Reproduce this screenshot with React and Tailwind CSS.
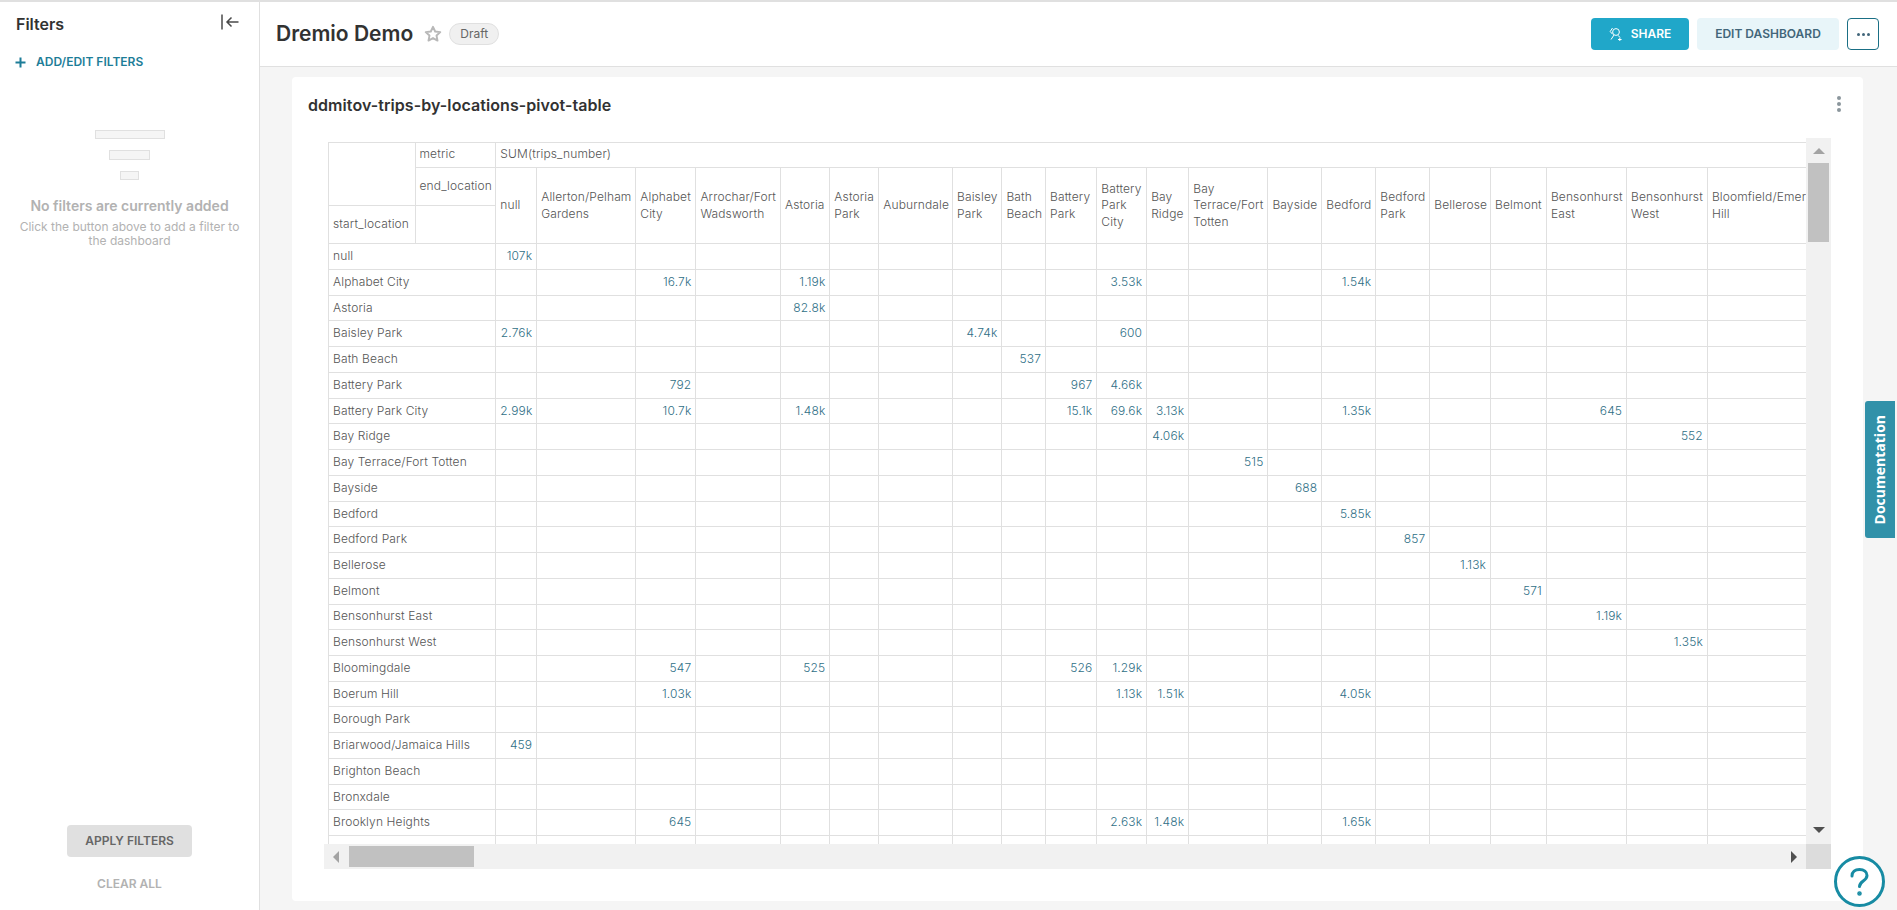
import React from 'react';

const colWidths = [
  'w-[86.5px]', 'w-[80.8px]', 'w-[40.9px]', 'w-[99.1px]', 'w-[60.1px]', 'w-[84.6px]', 'w-[49.4px]', 'w-[48.9px]',
  'w-[73.8px]', 'w-[49.4px]', 'w-[43.6px]', 'w-[51.3px]', 'w-[49.8px]', 'w-[42.1px]', 'w-[79.2px]', 'w-[53.9px]',
  'w-[54px]', 'w-[54px]', 'w-[60.8px]', 'w-[55.8px]', 'w-[80.2px]', 'w-[80.8px]', 'w-[125px]',
];

const endLocations = [
  'null', 'Allerton/Pelham Gardens', 'Alphabet City', 'Arrochar/Fort Wadsworth', 'Astoria', 'Astoria Park',
  'Auburndale', 'Baisley Park', 'Bath Beach', 'Battery Park', 'Battery Park City', 'Bay Ridge',
  'Bay Terrace/Fort Totten', 'Bayside', 'Bedford', 'Bedford Park', 'Bellerose', 'Belmont',
  'Bensonhurst East', 'Bensonhurst West', 'Bloomfield/Emerson Hill',
];

const rows = [
  ['null', { 0: '107k' }],
  ['Alphabet City', { 2: '16.7k', 4: '1.19k', 10: '3.53k', 14: '1.54k' }],
  ['Astoria', { 4: '82.8k' }],
  ['Baisley Park', { 0: '2.76k', 7: '4.74k', 10: '600' }],
  ['Bath Beach', { 8: '537' }],
  ['Battery Park', { 2: '792', 9: '967', 10: '4.66k' }],
  ['Battery Park City', { 0: '2.99k', 2: '10.7k', 4: '1.48k', 9: '15.1k', 10: '69.6k', 11: '3.13k', 14: '1.35k', 18: '645' }],
  ['Bay Ridge', { 11: '4.06k', 19: '552' }],
  ['Bay Terrace/Fort Totten', { 12: '515' }],
  ['Bayside', { 13: '688' }],
  ['Bedford', { 14: '5.85k' }],
  ['Bedford Park', { 15: '857' }],
  ['Bellerose', { 16: '1.13k' }],
  ['Belmont', { 17: '571' }],
  ['Bensonhurst East', { 18: '1.19k' }],
  ['Bensonhurst West', { 19: '1.35k' }],
  ['Bloomingdale', { 2: '547', 4: '525', 9: '526', 10: '1.29k' }],
  ['Boerum Hill', { 2: '1.03k', 10: '1.13k', 11: '1.51k', 14: '4.05k' }],
  ['Borough Park', {}],
  ['Briarwood/Jamaica Hills', { 0: '459' }],
  ['Brighton Beach', {}],
  ['Bronxdale', {}],
  ['Brooklyn Heights', { 2: '645', 10: '2.63k', 11: '1.48k', 14: '1.65k' }],
  ['\u00a0', {}],
];

const cell = 'border border-[#e0e0e0] px-1 py-[3.97px] align-middle';

function Triangle({ dir, className }) {
  const points = { up: '0,6 6,0 12,6', down: '0,0 12,0 6,6', left: '6,0 6,12 0,6', right: '0,0 6,6 0,12' }[dir];
  const horizontal = dir === 'up' || dir === 'down';
  return (
    <svg width={horizontal ? 12 : 6} height={horizontal ? 6 : 12} viewBox={horizontal ? '0 0 12 6' : '0 0 6 12'} className={className}>
      <polygon points={points} fill="currentColor" />
    </svg>
  );
}

function PivotTable() {
  return (
    <table className="table-fixed w-[1504px] border-collapse text-xs font-light tracking-[0.13px] leading-[1.4] text-[#555555]">
      <colgroup>
        {colWidths.map((w, i) => (
          <col key={i} className={w} />
        ))}
      </colgroup>
      <thead>
        <tr>
          <th rowSpan={2} className={`${cell} font-light text-left`}></th>
          <th className={`${cell} font-light text-left`}>metric</th>
          <th colSpan={21} className={`${cell} font-light text-left`}>SUM(trips_number)</th>
        </tr>
        <tr className="h-[38px]">
          <th className={`${cell} font-light text-left`}>end_location</th>
          {endLocations.map((name) => (
            <th key={name} rowSpan={2} className={`${cell} font-light text-left`}>{name}</th>
          ))}
        </tr>
        <tr className="h-[38px]">
          <th className={`${cell} font-light text-left`}>start_location</th>
          <th className={cell}></th>
        </tr>
      </thead>
      <tbody>
        {rows.map(([label, values], r) => (
          <tr key={r}>
            <td colSpan={2} className={cell}>{label}</td>
            {endLocations.map((_, c) => (
              <td key={c} className={`${cell} text-right text-[#2f6f86]`}>{values[c] || '\u00a0'}</td>
            ))}
          </tr>
        ))}
      </tbody>
    </table>
  );
}

function Sidebar() {
  return (
    <aside className="w-[260px] shrink-0 border-r border-[#e0e0e0] flex flex-col bg-white">
      <div className="flex items-center justify-between pl-4 pr-[20px] h-[44px]">
        <span className="text-base font-semibold text-[#323232]">Filters</span>
        <svg width="18" height="16" viewBox="0 0 18 16" fill="none" stroke="#4a4a4a" strokeWidth="1.5" className="-mt-[4px]">
          <path d="M1 0.5V15.5" />
          <path d="M17.5 8H6M10.5 3.5 6 8l4.5 4.5" />
        </svg>
      </div>
      <div className="flex items-center pl-[15px] mt-[4px] h-[24px]">
        <svg width="11" height="11" viewBox="0 0 11 11" stroke="#1d7d98" strokeWidth="2">
          <path d="M5.5 0.5v10M0.5 5.5h10" />
        </svg>
        <span className="ml-[10px] text-xs font-semibold text-[#1d7d98]">ADD/EDIT FILTERS</span>
      </div>
      <div className="flex flex-col items-center mt-[56px]">
        <div className="w-[70px] h-[9px] bg-[#f5f5f5] border border-[#e0e0e0]"></div>
        <div className="w-[41px] h-[10px] bg-[#f5f5f5] border border-[#e0e0e0] mt-[11px]"></div>
        <div className="w-[19px] h-[9px] bg-[#f5f5f5] border border-[#e0e0e0] mt-[11px]"></div>
        <p className="mt-[16px] text-sm font-semibold text-[#b2b2b2]">No filters are currently added</p>
        <p className="mt-[4px] w-[240px] text-center text-xs leading-[14px] text-[#b2b2b2]">
          Click the button above to add a filter to the dashboard
        </p>
      </div>
      <div className="mt-auto flex flex-col items-center pb-[18px]">
        <button className="w-[125px] h-8 rounded bg-[#e0e0e0] text-xs font-semibold text-[#666666]">APPLY FILTERS</button>
        <span className="mt-[19px] text-xs font-semibold text-[#b2b2b2]">CLEAR ALL</span>
      </div>
    </aside>
  );
}

function Header() {
  return (
    <header className="h-[65px] shrink-0 border-b border-[#e0e0e0] bg-white flex items-center pl-4 pr-[18px]">
      <h1 className="text-[21px] font-semibold text-[#323232]">Dremio Demo</h1>
      <svg width="18" height="18" viewBox="0 0 24 24" fill="none" stroke="#b8b8b8" strokeWidth="2.6" strokeLinejoin="round" className="ml-[11px]">
        <path d="M12 2.5l2.9 6.2 6.8.8-5 4.6 1.3 6.7-6-3.4-6 3.4 1.3-6.7-5-4.6 6.8-.8z" />
      </svg>
      <span className="ml-[7px] h-[22px] w-[50px] rounded-full border border-[#e0e0e0] bg-[#f0f0f0] flex items-center justify-center text-xs text-[#666666]">Draft</span>
      <button className="ml-auto w-[98px] h-8 rounded bg-[#20a7c9] flex items-center justify-center gap-[9px] text-xs font-semibold text-white">
        <svg width="13" height="14" viewBox="0 0 13 14" fill="none" stroke="white" strokeWidth="1">
          <circle cx="7" cy="5" r="3.4" />
          <path d="M3.5 1 1.2 4.5 3.5 7.2M5 8 2 12.5M9 8.3l2 2.2M9 12.5h3.6M10.8 10.8v3.2" />
        </svg>
        SHARE
      </button>
      <button className="ml-2 w-[142px] h-8 rounded bg-[#e8f5f9] text-xs font-semibold text-[#42667a]">EDIT DASHBOARD</button>
      <button className="ml-2 w-8 h-8 rounded border border-[#1a6f85] bg-white flex items-center justify-center gap-[2px]">
        <span className="w-[3px] h-[3px] rounded-full bg-[#42667a]"></span>
        <span className="w-[3px] h-[3px] rounded-full bg-[#42667a]"></span>
        <span className="w-[3px] h-[3px] rounded-full bg-[#42667a]"></span>
      </button>
    </header>
  );
}

export default function App() {
  return (
    <div className="relative w-[1897px] h-[910px] overflow-hidden flex flex-col bg-white [font-family:Inter,sans-serif]">
      <div className="h-0.5 shrink-0 bg-[#e0e0e0]"></div>
      <div className="flex-1 flex min-h-0">
        <Sidebar />
        <main className="flex-1 min-w-0 flex flex-col">
          <Header />
          <div className="flex-1 min-h-0 bg-[#f5f5f5] pl-8 pr-[34px] pt-[10px] pb-[9px]">
            <section className="h-full rounded bg-white flex flex-col pl-8 pr-8">
              <div className="h-[61px] shrink-0 flex items-center justify-between -ml-4 -mr-4 pr-[6px] pb-[5px]">
                <h2 className="text-base font-semibold tracking-[0.07px] text-[#323232]">ddmitov-trips-by-locations-pivot-table</h2>
                <div className="flex flex-col gap-[2px] mb-[2px]">
                  <span className="w-1 h-1 rounded-full bg-[#8b969c]"></span>
                  <span className="w-1 h-1 rounded-full bg-[#8b969c]"></span>
                  <span className="w-1 h-1 rounded-full bg-[#8b969c]"></span>
                </div>
              </div>
              <div className="h-[731px] shrink-0 flex flex-col">
                <div className="flex-1 min-h-0 flex">
                  <div className="flex-1 min-w-0 overflow-hidden pl-1 pt-[3.5px]">
                    <PivotTable />
                  </div>
                  <div className="w-[25px] shrink-0 bg-[#f1f1f1] flex flex-col items-center">
                    <Triangle dir="up" className="mt-[10px] text-[#a3a3a3]" />
                    <div className="mt-[9px] w-[21px] h-[79px] bg-[#c1c1c1]"></div>
                    <Triangle dir="down" className="mt-auto mb-[11px] text-[#505050]" />
                  </div>
                </div>
                <div className="h-[25px] shrink-0 flex">
                  <div className="flex-1 min-w-0 bg-[#f1f1f1] flex items-center">
                    <Triangle dir="left" className="ml-[9px] text-[#a3a3a3]" />
                    <div className="ml-[10px] w-[125px] h-[21px] bg-[#c1c1c1]"></div>
                    <Triangle dir="right" className="ml-auto mr-[9px] text-[#505050]" />
                  </div>
                  <div className="w-[25px] shrink-0 bg-[#dcdcdc]"></div>
                </div>
              </div>
            </section>
          </div>
        </main>
      </div>

      <div className="absolute right-[2px] top-[401px] w-[30px] h-[137px] rounded-tl-[3px] rounded-bl-[3px] bg-[#3191a9] flex items-center justify-center">
        <span className="[writing-mode:vertical-rl] rotate-180 text-sm font-bold text-white [font-family:'Open_Sans',sans-serif]">Documentation</span>
      </div>

      <div className="absolute left-[1834px] top-[856px] w-[51px] h-[51px] rounded-full bg-white border-[3px] border-[#178ba3] flex items-center justify-center">
        <svg width="19" height="28" viewBox="0 0 19 28" fill="none" stroke="#178ba3" strokeWidth="3" strokeLinecap="round">
          <path d="M2 8c0-4 3-6.5 7.5-6.5S17 4 17 7.5c0 5.5-7.5 5.5-7.5 11" />
          <circle cx="9.5" cy="25.5" r="0.8" fill="#178ba3" />
        </svg>
      </div>
    </div>
  );
}
